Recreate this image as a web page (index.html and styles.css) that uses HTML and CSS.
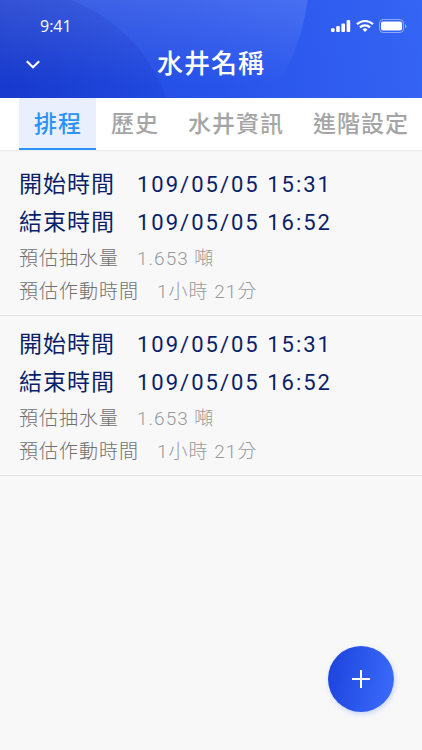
FILE: index.html
```
<!DOCTYPE html>
<html lang="zh-Hant">
<head>
    <meta charset="UTF-8">
    <meta name="viewport" content="width=device-width, initial-scale=1.0">
    <title>水井名稱</title>
    <link rel="stylesheet" href="styles.css">
</head>
<body>

    <header class="header">
        <div class="status-bar">
            <span class="clock">9:41</span>
            <div class="status-icons">
                <svg width="20" height="14" viewBox="0 0 20 14" fill="#fff">
                    <rect x="0" y="9.200" width="3.600" height="3.800" rx="1"/>
                    <rect x="5.200" y="7" width="3.600" height="6" rx="1"/>
                    <rect x="10.400" y="4.500" width="3.600" height="8.500" rx="1"/>
                    <rect x="15.600" y="1" width="3.600" height="12" rx="1"/>
                </svg>
                <svg width="18" height="14" viewBox="0 0 18 14" fill="none" stroke="#fff" stroke-width="2.2">
                    <path d="M1 5.200a11.600 11.600 0 0 1 16 0"/>
                    <path d="M4 8.400a7.200 7.200 0 0 1 10 0"/>
                    <path d="M9 13l-2.500-2.600a3.700 3.700 0 0 1 5 0z" fill="#fff" stroke="none"/>
                </svg>
                <svg width="28" height="14" viewBox="0 0 28 14">
                    <rect x=".5" y=".5" width="24" height="13" rx="3.5" fill="none" stroke="#fff" stroke-opacity=".45"/>
                    <rect x="2" y="2.500" width="21" height="9" rx="1.800" fill="#fff"/>
                    <path d="M26 5v4.400c1.900-.8 1.900-3.600 0-4.400z" fill="#fff" fill-opacity=".5"/>
                </svg>
            </div>
        </div>
        <div class="title-bar">
            <button class="back" type="button" aria-label="收合">
                <svg width="14" height="9" viewBox="0 0 14 9" fill="none" stroke="#fff" stroke-width="2.2">
                    <path d="M.8 1.200L7 7.200l6.200-6"/>
                </svg>
            </button>
            <h1>水井名稱</h1>
        </div>
    </header>

    <nav class="tabs">
        <a class="tab active" href="#schedule" aria-current="page">排程</a>
        <a class="tab" href="#history">歷史</a>
        <a class="tab" href="#info">水井資訊</a>
        <a class="tab" href="#settings">進階設定</a>
    </nav>

    <main class="schedule-list" id="schedule">
        <dl class="schedule">
            <div class="row main-row">
                <dt>開始時間</dt>
                <dd>109/05/05 15:31</dd>
            </div>
            <div class="row main-row">
                <dt>結束時間</dt>
                <dd>109/05/05 16:52</dd>
            </div>
            <div class="row">
                <dt>預估抽水量</dt>
                <dd>1.653 噸</dd>
            </div>
            <div class="row">
                <dt>預估作動時間</dt>
                <dd>1小時 21分</dd>
            </div>
        </dl>
        <dl class="schedule">
            <div class="row main-row">
                <dt>開始時間</dt>
                <dd>109/05/05 15:31</dd>
            </div>
            <div class="row main-row">
                <dt>結束時間</dt>
                <dd>109/05/05 16:52</dd>
            </div>
            <div class="row">
                <dt>預估抽水量</dt>
                <dd>1.653 噸</dd>
            </div>
            <div class="row">
                <dt>預估作動時間</dt>
                <dd>1小時 21分</dd>
            </div>
        </dl>
    </main>

    <!-- Add schedule -->
    <button class="add-button" type="button" aria-label="新增排程">
        <svg width="18" height="18" viewBox="0 0 18 18" stroke="#fff" stroke-width="2">
            <path d="M9 0v18M0 9h18"/>
        </svg>
    </button>

</body>
</html>
```
FILE: styles.css
```
* {
    box-sizing: border-box;
}
body {
    margin: 0;
    min-height: 100vh;
    background-color: #f8f8f8;
    font-family: Roboto, "Noto Sans CJK TC", sans-serif;
    letter-spacing: 1px;
}
.header {
    position: relative;
    overflow: hidden;
    height: 98px;
    color: #fff;
    background: linear-gradient(80deg, #1e46da 0%, #2853ea 50%, #3565f4 100%);
}
/* Decorative circles behind the header */
.header::before,
.header::after {
    content: "";
    position: absolute;
    border-radius: 50%;
}
.header::before {
    left: -145px;
    top: -10px;
    width: 320px;
    height: 320px;
    background: linear-gradient(90deg, rgba(16, 44, 190, 0.5) 40%, rgba(16, 44, 190, 0.14) 100%);
}
.header::after {
    left: -109px;
    top: -234px;
    width: 418px;
    height: 418px;
    background: linear-gradient(rgba(255, 255, 255, 0.12) 56%, rgba(255, 255, 255, 0) 76%);
}
.status-bar,
.title-bar {
    position: relative;
    z-index: 1;
    display: flex;
    align-items: center;
}
.status-bar {
    justify-content: space-between;
    padding: 16px 15px 0 40px;
}
.clock {
    font-family: "Open Sans", sans-serif;
    font-size: 16px;
    line-height: 20px;
    letter-spacing: normal;
}
.status-icons {
    display: flex;
    align-items: center;
    gap: 5px;
}
.title-bar {
    justify-content: center;
    height: 56px;
}
.title-bar h1 {
    margin: 0;
    font-size: 26px;
    font-weight: 500;
    line-height: 36px;
}
.back {
    position: absolute;
    left: 16px;
    display: flex;
    padding: 10px;
    border: none;
    background: none;
    cursor: pointer;
}
.tabs {
    display: flex;
    padding-left: 19px;
    overflow: hidden;
    background-color: #fff;
    border-bottom: 1px solid #eaeaea;
}
.tab {
    flex: none;
    padding: 4px 14px 0 15px;
    border-bottom: 2px solid transparent;
    color: #a5a5a5;
    font-size: 23px;
    font-weight: 500;
    line-height: 46px;
    text-decoration: none;
}
.tab.active {
    background-color: #e9effd;
    border-bottom-color: #2b93f5;
    color: #2b93f5;
}
.schedule-list {
    padding-top: 5px;
}
.schedule {
    margin: 0;
    padding: 10px 19px 7px;
    border-bottom: 1px solid #e2e2e2;
}
.row {
    display: flex;
    gap: 18px;
    color: #707070;
    font-size: 19px;
    font-weight: 300;
    line-height: 33px;
}
.row dd {
    margin: 0;
    color: #999;
}
.main-row {
    gap: 22px;
    color: #0a1f68;
    font-size: 23px;
    font-weight: 400;
    line-height: 38px;
}
.main-row dd {
    color: #0a1f68;
    font-size: 22px;
    letter-spacing: 2px;
}
.add-button {
    position: fixed;
    right: 28px;
    bottom: 38px;
    display: flex;
    align-items: center;
    justify-content: center;
    width: 66px;
    height: 66px;
    border: none;
    border-radius: 50%;
    background: linear-gradient(100deg, #1c42dc, #3c6dfc);
    box-shadow: 1px 2px 5px rgba(60, 109, 252, 0.25);
    cursor: pointer;
}
```
